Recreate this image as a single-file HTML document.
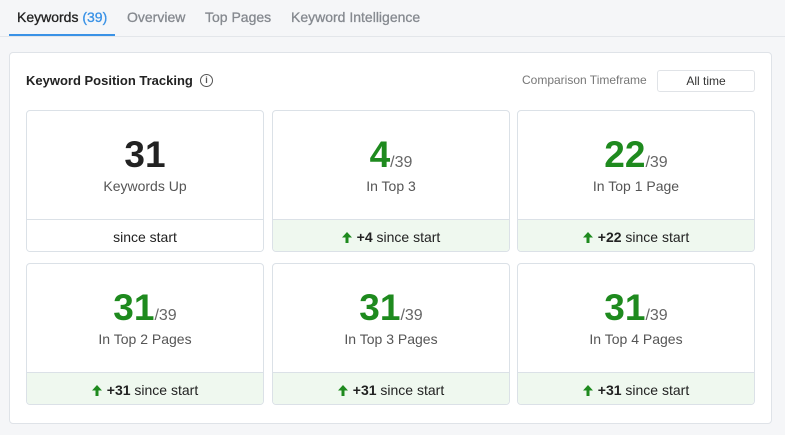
<!DOCTYPE html>
<html><head><style>
*{margin:0;padding:0;box-sizing:border-box}
body{width:785px;height:435px;background:#f5f6f8;font-family:"Liberation Sans",Arial,sans-serif;position:relative;overflow:hidden;color:#222}
.tabs{position:absolute;left:0;top:0;width:785px;height:37px;border-bottom:1px solid #e3e6ea}
.tab{position:absolute;top:9px;font-size:14px;color:#85898f;-webkit-text-stroke:0.3px #85898f}
.tab.a{color:#222;-webkit-text-stroke:0.3px #222}
.ul{position:absolute;left:9px;top:34px;width:106px;height:2px;background:#3a92e6}
.card{position:absolute;left:9px;top:52px;width:763px;height:372px;background:#fff;border:1px solid #dfe3e8;border-radius:4px}
.title{position:absolute;left:26px;top:73px;font-size:13px;font-weight:bold;color:#222}
.info{position:absolute;left:200px;top:74px;width:13px;height:13px;border:1.2px solid #555;border-radius:50%;font-size:9px;text-align:center;line-height:11px;color:#555;font-weight:bold}
.cmp{position:absolute;left:522px;top:73px;font-size:12px;color:#777}
.btn{position:absolute;left:657px;top:70px;width:98px;height:22px;border:1px solid #e0e3e7;border-radius:3px;font-size:12px;text-align:center;line-height:20px;color:#333}
.cell{position:absolute;width:238px;height:142px;border:1px solid #dbe1e7;border-radius:4px;overflow:hidden;text-align:center}
.num{position:absolute;left:0;right:0;top:22px;font-size:37px;font-weight:bold;color:#1e8a1e;line-height:44px}
.num.k{color:#222}
.num span{font-size:16px;font-weight:normal;color:#666}
.lbl{position:absolute;left:0;right:0;top:67px;font-size:14px;color:#555}
.foot{position:absolute;left:0;right:0;bottom:0;height:32px;border-top:1px solid #dbe1e7;background:#eff8ef;font-size:14px;line-height:34px;color:#222}
.foot.w{background:#fff}
.arr{display:inline-block;width:10px;height:11px;vertical-align:-1px;margin-right:5px}
</style></head><body>
<div class="tabs">
<div class="tab a" style="left:17px">Keywords <span style="color:#3a92e6;-webkit-text-stroke:0.3px #3a92e6">(39)</span></div>
<div class="tab" style="left:127px">Overview</div>
<div class="tab" style="left:205px">Top Pages</div>
<div class="tab" style="left:291px">Keyword Intelligence</div>
<div class="ul"></div>
</div>
<div class="card"></div>
<div class="title">Keyword Position Tracking</div>
<div class="info">i</div>
<div class="cmp">Comparison Timeframe</div>
<div class="btn">All time</div>

<div class="cell" style="left:26px;top:110px"><div class="num k">31</div><div class="lbl">Keywords Up</div><div class="foot w">since start</div></div>
<div class="cell" style="left:272px;top:110px"><div class="num">4<span>/39</span></div><div class="lbl">In Top 3</div><div class="foot"><svg class="arr" viewBox="0 0 10 11"><path d="M5 0L10 5.5H6.5V11H3.5V5.5H0Z" fill="#1e8a1e"/></svg><b>+4</b> since start</div></div>
<div class="cell" style="left:517px;top:110px"><div class="num">22<span>/39</span></div><div class="lbl">In Top 1 Page</div><div class="foot"><svg class="arr" viewBox="0 0 10 11"><path d="M5 0L10 5.5H6.5V11H3.5V5.5H0Z" fill="#1e8a1e"/></svg><b>+22</b> since start</div></div>
<div class="cell" style="left:26px;top:263px"><div class="num">31<span>/39</span></div><div class="lbl">In Top 2 Pages</div><div class="foot"><svg class="arr" viewBox="0 0 10 11"><path d="M5 0L10 5.5H6.5V11H3.5V5.5H0Z" fill="#1e8a1e"/></svg><b>+31</b> since start</div></div>
<div class="cell" style="left:272px;top:263px"><div class="num">31<span>/39</span></div><div class="lbl">In Top 3 Pages</div><div class="foot"><svg class="arr" viewBox="0 0 10 11"><path d="M5 0L10 5.5H6.5V11H3.5V5.5H0Z" fill="#1e8a1e"/></svg><b>+31</b> since start</div></div>
<div class="cell" style="left:517px;top:263px"><div class="num">31<span>/39</span></div><div class="lbl">In Top 4 Pages</div><div class="foot"><svg class="arr" viewBox="0 0 10 11"><path d="M5 0L10 5.5H6.5V11H3.5V5.5H0Z" fill="#1e8a1e"/></svg><b>+31</b> since start</div></div>
</body></html>
